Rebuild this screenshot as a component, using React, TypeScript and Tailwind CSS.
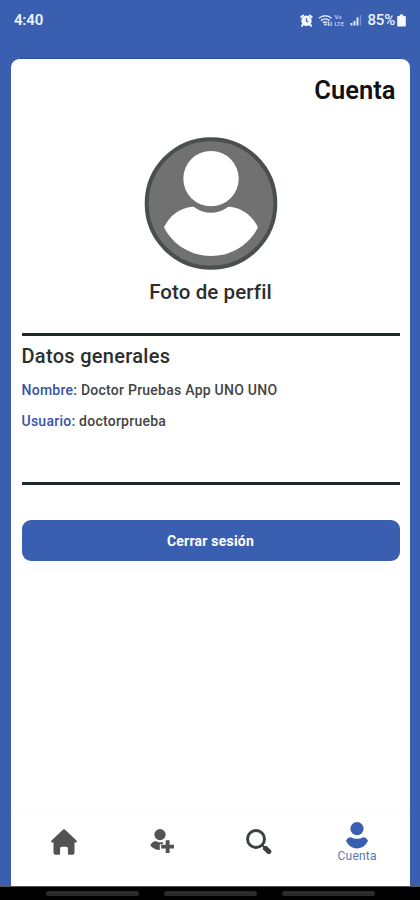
import React, { useState } from "react";

interface TabItem {
  id: string;
  label: string;
  icon: React.ReactNode;
}

function AlarmIcon() {
  return (
    <svg className="w-[13px] h-[13px]" viewBox="0 0 13 13" fill="none">
      <circle cx="6.5" cy="6.8" r="5.2" fill="#f4f7ff" />
      <path d="M1.3 3 3.2 1.5M11.7 3 9.8 1.5M2.8 10.6 2 11.8M10.2 10.6l.8 1.2" stroke="#f4f7ff" strokeWidth="2" strokeLinecap="round" />
      <path d="M6.500 4.300v2.900l1.500.7" stroke="#3b5fb0" strokeWidth="1.2" />
    </svg>
  );
}

function WifiIcon() {
  return (
    <svg className="w-[15px] h-[13px]" viewBox="0 0 15 13" fill="none" stroke="#dfe8fb">
      <path d="M1 4.200c3.600-3.400 9-3.400 12.600 0M3 6.600c2.500-2.300 6-2.300 8.500 0M5 8.900c1.400-1.200 3-1.200 4.300 0" strokeWidth="1.5" />
      <path d="M7.400 12 5.600 9.800h3.400z" fill="#dfe8fb" stroke="none" />
      <path d="M10.600 7.600v4.200M9.300 10.500l1.300 1.400 1.300-1.400M13.200 12V7.800" strokeWidth="1" />
    </svg>
  );
}

function SignalIcon() {
  return (
    <svg className="w-[12px] h-[12px]" viewBox="0 0 12 12">
      <path d="M.5 9h2v2.500h-2zM3.500 7h2v4.500h-2zM6.500 3.500h2v8h-2z" fill="#dfe8fb" />
      <path d="M9.800 1h1.400v10.500H9.800z" fill="#7893d0" />
    </svg>
  );
}

function BatteryIcon() {
  return (
    <svg className="w-[9px] h-[13px]" viewBox="0 0 9 13">
      <path d="M2.800.5h3.400v1.600H8c.5 0 .8.300.8.800v8.800c0 .5-.3.800-.8.800H1c-.5 0-.8-.3-.8-.8V2.900c0-.5.3-.8.8-.8h1.800z" fill="#f4f7ff" />
    </svg>
  );
}

function StatusBar() {
  return (
    <div className="h-[58px] shrink-0 flex items-start justify-between px-[14px] pt-[10px] text-[#edf3ff]">
      <span className="text-[15px] leading-5 font-semibold tracking-[-0.2px]">4:40</span>
      <div className="flex items-center h-5">
        <AlarmIcon />
        <span className="ml-[5px] flex">
          <WifiIcon />
        </span>
        {/* VoLTE badge */}
        <span className="ml-[2px] w-[15px] flex flex-col text-[6px] leading-[7px] font-medium text-[#c9d7f5]">
          <span>Vo</span>
          <span>LTE</span>
        </span>
        <SignalIcon />
        <span className="ml-[6px] w-[29.5px] text-[15px] leading-5 font-medium tracking-[-0.2px]">85%</span>
        <BatteryIcon />
      </div>
    </div>
  );
}

function Avatar() {
  return (
    <svg className="w-[134px] h-[134px]" viewBox="0 0 134 134">
      <circle cx="67" cy="66.500" r="64.300" fill="#717171" stroke="#4a4e4e" strokeWidth="4" />
      <circle cx="67" cy="41.600" r="27.700" fill="#fff" />
      <path d="M48 69.800c1.500-.3 2.400.1 3.500 1.200 8.500 6.400 22.500 6.400 31 0 1.100-1.100 2-1.500 3.500-1.200 12.500 1.500 22.500 9 28 20.500-9 18-27.500 28.700-47 28.700S29 108.300 20 90.300c5.500-11.500 15.500-19 28-20.500z" fill="#fff" />
    </svg>
  );
}

function HomeIcon() {
  return (
    <svg className="w-[26px] h-[26px]" viewBox="0 0 26 26" fill="#505454">
      <path d="M11.900.7c.7-.6 1.500-.6 2.200 0L25.500 11.600c.7.800.3 2-.8 2h-1.200v10c0 1.400-.7 2.100-2 2.100h-3.100c-1 0-1.500-.5-1.500-1.500v-4.700c0-1.100-.6-1.800-1.700-1.800h-4.400c-1.100 0-1.700.7-1.700 1.800v4.700c0 1-.5 1.500-1.500 1.500H4.500c-1.300 0-2-.7-2-2.100v-10H1.300c-1.100 0-1.500-1.200-.8-2z" />
    </svg>
  );
}

function AddPersonIcon() {
  return (
    <svg className="w-[26px] h-[26px]" viewBox="0 0 26 26" fill="#505454">
      <circle cx="11" cy="5.600" r="5.600" />
      <path d="M6.500 12c2.400 1.500 5 1.900 7.300.8v2.500H10.800v5.700C6.800 20.900 3.500 19.300 1.200 16.200 2.500 14 4.200 12.500 6.500 12z" />
      <path d="M16.700 11.300h3.900v4.400H25v3.900h-4.400V24h-3.900v-4.400h-4.500v-3.900h4.500z" />
    </svg>
  );
}

function SearchIcon() {
  return (
    <svg className="w-[26px] h-[26px]" viewBox="0 0 26 26" fill="none">
      <circle cx="10" cy="10" r="8.500" stroke="#3c4040" strokeWidth="2.900" />
      <path d="M16 16l3 3" stroke="#3c4040" strokeWidth="1.800" />
      <path d="M19.500 19.400l3.400 3.200" stroke="#3c4040" strokeWidth="5" strokeLinecap="round" />
    </svg>
  );
}

function PersonIcon() {
  return (
    <svg className="w-[22px] h-[27px]" viewBox="0 0 22 27" fill="#3b5fb0">
      <circle cx="11" cy="6.600" r="6.600" />
      <path d="M5 15.200c3.500 2.200 8.500 2.200 12 0 2.600.2 4.200 1.600 5 3.600-1.900 4.500-6.100 7.600-11 7.600S1.900 23.300 0 18.800c.8-2 2.400-3.400 5-3.600z" />
    </svg>
  );
}

const TABS: TabItem[] = [
  { id: "home", label: "Inicio", icon: <HomeIcon /> },
  { id: "add", label: "Agregar", icon: <AddPersonIcon /> },
  { id: "search", label: "Buscar", icon: <SearchIcon /> },
  { id: "account", label: "Cuenta", icon: <PersonIcon /> },
];

export default function App() {
  const [activeTab, setActiveTab] = useState("account");

  return (
    <div className="w-[420px] h-[900px] flex flex-col overflow-hidden bg-[#3b5fb0] font-['Roboto',sans-serif]">
      <StatusBar />

      {/* Card */}
      <main className="flex-1 ml-[11px] mr-[10px] flex flex-col bg-white rounded-t-[9px] border-t border-[#2c51a6]">
        <div className="px-[10.5px] flex flex-col">
          <h1 className="mt-[15px] pr-[4px] text-right text-[25.5px] leading-8 font-semibold text-[#111]">Cuenta</h1>

          <div className="mt-[31px] flex flex-col items-center">
            <Avatar />
            <p className="mt-[7px] text-[20.5px] leading-7 font-medium tracking-[0.1px] text-[#2c2e2e]">Foto de perfil</p>
          </div>

          {/* General data */}
          <section className="mt-[27px] h-[152px] border-y-[3px] border-[#20292b]">
            <h2 className="mt-[6px] text-[20px] leading-7 font-medium tracking-[0.3px] text-[#2c2e2e]">Datos generales</h2>
            <p className="mt-[10px] text-[14px] leading-5 font-medium tracking-[0.25px] text-[#444]">
              <span className="text-[#3453a8]">Nombre:</span> Doctor Pruebas App UNO UNO
            </p>
            <p className="mt-[11px] text-[14px] leading-5 font-medium tracking-[0.25px] text-[#444]">
              <span className="text-[#3453a8]">Usuario:</span> doctorprueba
            </p>
          </section>

          <button className="mt-[35px] h-[41px] rounded-[9px] bg-[#3b5fb0] pt-px text-white text-[14px] font-bold tracking-[0.22px]">
            Cerrar sesión
          </button>
        </div>

        {/* Tabs */}
        <nav className="mt-auto h-[74px] pl-[4px] pr-[4px] grid grid-cols-4 border-t border-[#fafafa]">
          {TABS.map((tab) => (
            <button
              key={tab.id}
              aria-label={tab.label}
              onClick={() => setActiveTab(tab.id)}
              className="flex flex-col items-center"
            >
              <span className={activeTab === tab.id ? "mt-[9px] h-[27px]" : "mt-[16px]"}>{tab.icon}</span>
              {activeTab === tab.id && (
                <span className="-mt-px text-[12px] leading-4 tracking-[0.2px] text-[#5a76b5]">{tab.label}</span>
              )}
            </button>
          ))}
        </nav>
      </main>

      {/* System navigation */}
      <div className="h-[14px] shrink-0 flex justify-center gap-[25px] bg-black pt-[4px] border-t border-[#555]">
        <span className="w-[93px] h-[5px] rounded-sm bg-[#2c2c2c]" />
        <span className="w-[93px] h-[5px] rounded-sm bg-[#2c2c2c]" />
        <span className="w-[93px] h-[5px] rounded-sm bg-[#2c2c2c]" />
      </div>
    </div>
  );
}
